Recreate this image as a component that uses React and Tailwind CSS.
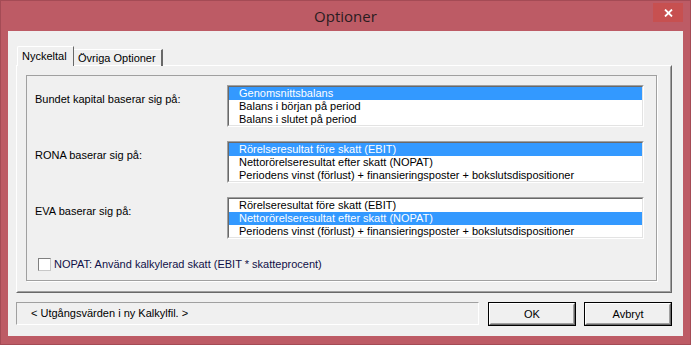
import React from 'react';

const LISTS = [
  {
    label: 'Bundet kapital baserar sig på:',
    items: ['Genomsnittsbalans', 'Balans i början på period', 'Balans i slutet på period'],
    selected: 0,
  },
  {
    label: 'RONA baserar sig på:',
    items: [
      'Rörelseresultat före skatt (EBIT)',
      'Nettorörelseresultat efter skatt (NOPAT)',
      'Periodens vinst (förlust) + finansieringsposter + bokslutsdispositioner',
    ],
    selected: 0,
  },
  {
    label: 'EVA baserar sig på:',
    items: [
      'Rörelseresultat före skatt (EBIT)',
      'Nettorörelseresultat efter skatt (NOPAT)',
      'Periodens vinst (förlust) + finansieringsposter + bokslutsdispositioner',
    ],
    selected: 1,
  },
];

function ListBox({ items, selected }) {
  return (
    <div className="w-[417px] h-[42px] border border-t-[#a0a0a0] border-l-[#a0a0a0] border-b-white border-r-white">
      <div className="h-full bg-white border border-t-[#696969] border-l-[#696969] border-b-[#e3e3e3] border-r-[#e3e3e3]">
        {items.map((it, i) => (
          <div
            key={it}
            className={
              i === selected
                ? 'h-[13px] leading-[13px] pl-[10px] bg-[#3399ff] text-white whitespace-nowrap'
                : 'h-[13px] leading-[13px] pl-[10px] text-black whitespace-nowrap'
            }
          >
            {it}
          </div>
        ))}
      </div>
    </div>
  );
}

function Button({ children }) {
  return (
    <div className="w-[88px] h-[24px] border border-black">
      <div className="h-full border border-t-white border-l-white border-b-[#696969] border-r-[#696969]">
        <div className="h-full flex items-center justify-center bg-[#f0f0f0] border border-t-[#f0f0f0] border-l-[#f0f0f0] border-b-[#a0a0a0] border-r-[#a0a0a0] text-black">
          {children}
        </div>
      </div>
    </div>
  );
}

export default function App() {
  return (
    <div
      className="w-[691px] h-[345px] bg-[#bd5b65] border border-[#a44b55] flex flex-col text-[11px]"
      style={{ fontFamily: '"Liberation Sans", Arial, sans-serif' }}
    >
      {/* title bar */}
      <div className="relative h-[30px] flex items-center justify-center">
        <span
          className="text-[15px] text-[#2a1c1f]"
          style={{ fontFamily: '"Open Sans", "Noto Sans", sans-serif' }}
        >
          Optioner
        </span>
        <div className="absolute right-[7px] top-[2px] w-[30px] h-[19px] bg-[#c75050] flex items-center justify-center">
          <svg width="9" height="8" viewBox="0 0 9 8">
            <path d="M1 0.5 L8 7.5 M8 0.5 L1 7.5" stroke="#fff" strokeWidth="1.8" />
          </svg>
        </div>
      </div>

      {/* client area */}
      <div className="mx-[7px] h-[305px] bg-[#f0f0f0] flex flex-col px-[8px] pt-[16px]">
        {/* tabs */}
        <div className="flex items-end h-[19px] ml-[1px] relative z-10 -mb-[1px]">
          <div className="h-[20px] w-[57px] bg-[#f0f0f0] border-t border-l border-white border-r border-r-[#696969] flex items-center pl-[4px] text-black rounded-tl-[2px]">
            Nyckeltal
          </div>
          <div className="h-[17px] w-[89px] border-t border-white border-r-2 border-r-[#696969] flex items-center pl-[4px] text-black">
            Övriga Optioner
          </div>
        </div>

        {/* tab panel */}
        <div className="w-[656px] h-[228px] border border-t-white border-l-white border-b-[#696969] border-r-[#696969]">
          <div className="h-full border border-t-[#f0f0f0] border-l-[#f0f0f0] border-b-[#a0a0a0] border-r-[#a0a0a0] pt-[8px] pl-[8px]">
            {/* inner frame */}
            <div className="w-[631px] h-[206px] border border-[#a0a0a0] shadow-[1px_1px_0_#ffffff] pt-[9px] pl-[200px]">
              <div className="flex flex-col gap-[14px]">
                {LISTS.map((l) => (
                  <div key={l.label} className="flex">
                    <div className="-ml-[192px] w-[192px] pt-[8px] leading-[13px] text-black">{l.label}</div>
                    <ListBox items={l.items} selected={l.selected} />
                  </div>
                ))}
              </div>
              <div className="flex items-center -ml-[189px] mt-[19px]">
                <div className="w-[13px] h-[13px] bg-white border border-t-[#808080] border-l-[#808080] border-b-[#c8c8c8] border-r-[#c8c8c8]" />
                <span className="ml-[3px] text-[#101048] leading-[13px]">
                  NOPAT: Använd kalkylerad skatt (EBIT * skatteprocent)
                </span>
              </div>
            </div>
          </div>
        </div>

        {/* bottom row */}
        <div className="flex mt-[9px] gap-[9px]">
          <div className="w-[463px] h-[23px] border border-t-[#a0a0a0] border-l-[#a0a0a0] border-b-white border-r-white flex items-center pl-[14px] text-black">
            &lt; Utgångsvärden i ny Kalkylfil. &gt;
          </div>
          <div className="flex gap-[8px]">
            <Button>OK</Button>
            <Button>Avbryt</Button>
          </div>
        </div>
      </div>
    </div>
  );
}
